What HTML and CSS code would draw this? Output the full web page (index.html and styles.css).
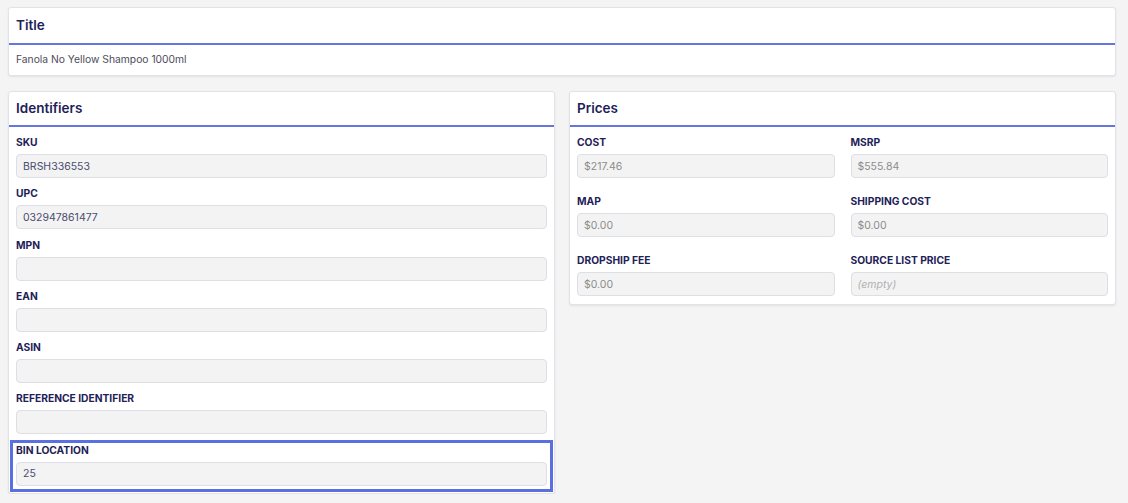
FILE: index.html
```html
<!DOCTYPE html>
<html>
<head>
    <meta charset="utf-8">
    <meta name="viewport" content="width=device-width, initial-scale=1">
    <title>Product</title>
    <link rel="stylesheet" href="styles.css">
</head>
<body>
<div class="page">
    <div class="card">
        <div class="card-header title-header">Title</div>
        <div class="card-body title-body">Fanola No Yellow Shampoo 1000ml</div>
    </div>

    <div class="columns">
        <div class="card">
            <div class="card-header">Identifiers</div>
            <div class="card-body ident-body">
                <div class="field">
                    <label>SKU</label>
                    <input type="text" class="dark" value="BRSH336553" readonly>
                </div>
                <div class="field">
                    <label>UPC</label>
                    <input type="text" class="dark" value="032947861477" readonly>
                </div>
                <div class="field">
                    <label>MPN</label>
                    <input type="text" class="dark" value="" readonly>
                </div>
                <div class="field">
                    <label>EAN</label>
                    <input type="text" class="dark" value="" readonly>
                </div>
                <div class="field">
                    <label>ASIN</label>
                    <input type="text" class="dark" value="" readonly>
                </div>
                <div class="field">
                    <label>REFERENCE IDENTIFIER</label>
                    <input type="text" class="dark" value="" readonly>
                </div>
                <div class="field highlight">
                    <label>BIN LOCATION</label>
                    <input type="text" class="dark" value="25" readonly>
                </div>
            </div>
        </div>

        <div class="card prices">
            <div class="card-header">Prices</div>
            <div class="card-body price-grid">
                <div class="field">
                    <label>COST</label>
                    <input type="text" value="$217.46" readonly>
                </div>
                <div class="field">
                    <label>MSRP</label>
                    <input type="text" value="$555.84" readonly>
                </div>
                <div class="field">
                    <label>MAP</label>
                    <input type="text" value="$0.00" readonly>
                </div>
                <div class="field">
                    <label>SHIPPING COST</label>
                    <input type="text" value="$0.00" readonly>
                </div>
                <div class="field">
                    <label>DROPSHIP FEE</label>
                    <input type="text" value="$0.00" readonly>
                </div>
                <div class="field">
                    <label>SOURCE LIST PRICE</label>
                    <input type="text" placeholder="(empty)" readonly>
                </div>
            </div>
        </div>
    </div>
</div>
</body>
</html>
```

FILE: styles.css
```css
body {
    font-family: Inter, "Noto Sans", sans-serif;
    background-color: #f4f4f4;
    margin: 0;
    color: #1e2157;
}

.page {
    padding: 7px 12px 0 8px;
}

.card {
    background-color: #fff;
    border: 1px solid #e2e2ea;
    border-radius: 3px;
    box-shadow: 0 1px 2px rgba(0,0,0,0.08);
}

.card-header {
    height: 33px;
    line-height: 32px;
    padding: 0 7px;
    font-size: 13.5px;
    font-weight: 600;
    border-bottom: 2px solid #6577dd;
}
.title-header {
    height: 35px;
    line-height: 34px;
}

.card-body {
    padding: 8px 7px 0 7px;
}

.title-body {
    padding: 8px 7px 9px 7px;
    font-size: 10.3px;
    line-height: 13px;
    color: #4c4c5a;
}

.columns {
    display: flex;
    gap: 14px;
    margin-top: 15px;
    align-items: flex-start;
}
.columns .card {
    flex: 1;
}

.field {
    margin-bottom: 8.3px;
}
.field label {
    display: block;
    font-size: 10.25px;
    font-weight: 700;
    line-height: 14px;
    margin-bottom: 5px;
}
.field input {
    display: block;
    width: 100%;
    height: 24px;
    box-sizing: border-box;
    padding: 0 6px;
    border: 1px solid #dedee6;
    border-radius: 4px;
    background-color: #f3f3f3;
    font-family: inherit;
    font-size: 10.5px;
    color: #8c8c8c;
    outline: none;
}
.field input.dark {
    color: #4a4c70;
}
.field input::placeholder {
    color: #b0b0b0;
    font-style: italic;
}

.field.highlight {
    margin: -3px -6px 1px -6px;
    padding: 0 3px 3px 3px;
    border: 3px solid #5a70e0;
}

.price-grid {
    display: grid;
    grid-template-columns: 1fr 1fr;
    column-gap: 16px;
}
.price-grid .field {
    margin-bottom: 16px;
}
.price-grid .field:nth-last-child(-n+2) {
    margin-bottom: 8px;
}
```
